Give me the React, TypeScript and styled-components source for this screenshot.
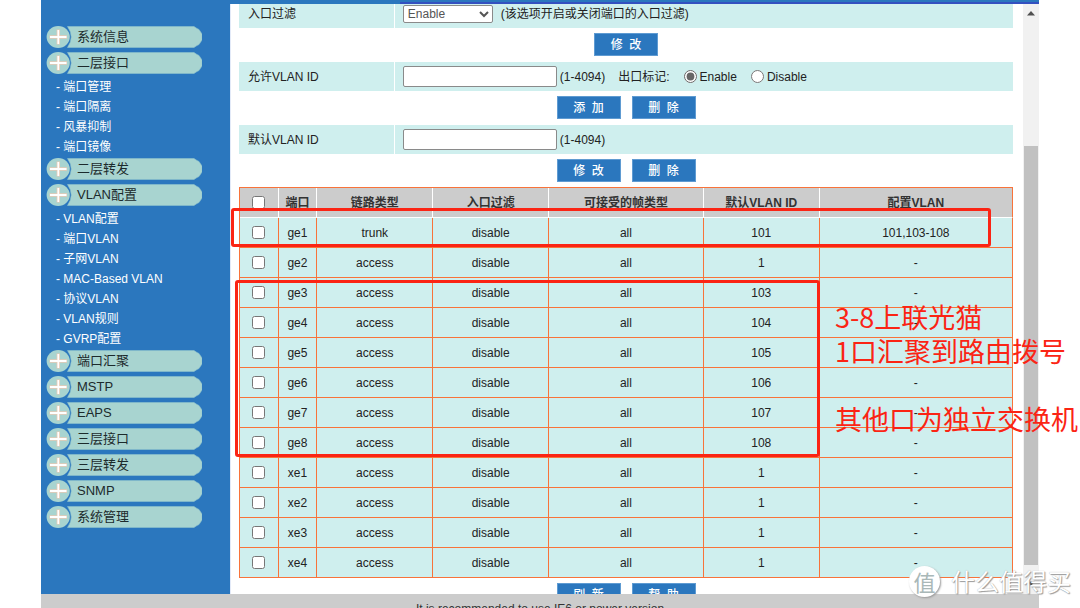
import React from 'react';
import styled, { createGlobalStyle } from 'styled-components';

const BLUE = '#2b77be';
const PALE = '#cfefee';
const PILL = '#a8d4d0';
const GRAY = '#cccccc';
const ORANGE = '#f8733a';
const RED = '#fb2414';

const GlobalStyle = createGlobalStyle`
  * { box-sizing: border-box; }
  body {
    margin: 0;
    background: #fff;
    color: #222;
    font: 12px/16px "Liberation Sans", "Noto Sans CJK SC", sans-serif;
    overflow: hidden;
  }
  button, input, select { font: inherit; margin: 0; }
`;

const Shell = styled.div`
  position: relative;
  display: flex;
  flex-direction: column;
  height: 100vh;
  padding: 0 41px;
  overflow: hidden;
`;

const Banner = styled.header`
  flex: none;
  display: flex;
  justify-content: flex-end;
  align-items: flex-end;
  height: 4px;
  background: ${BLUE};
`;

const BannerTrim = styled.div`
  width: 64%;
  height: 2px;
  background: #3350c0;
`;

const Body = styled.div`
  flex: 1;
  min-height: 0;
  display: flex;
`;

const Sidebar = styled.nav`
  flex: none;
  width: 189px;
  padding: 20px 0 0 5px;
  background: ${BLUE};
`;

const Group = styled.button`
  display: grid;
  align-items: center;
  height: 26px;
  padding: 0;
  border: 0;
  background: none;
  color: #1c2a2c;
  font-size: 13px;
  text-align: left;
  cursor: pointer;

  > * { grid-area: 1 / 1; }
`;

const GroupText = styled.span`
  padding-left: 31px;
`;

const SubList = styled.ul`
  margin: 0;
  padding: 0 0 0 10px;
  list-style: none;
`;

const SubItem = styled.li`
  height: 20px;
  line-height: 22px;
  color: #fff;
`;

const SubLink = styled.a`
  color: inherit;
  text-decoration: none;
`;

const Content = styled.main`
  flex: 1;
  min-width: 0;
  padding: 0 10px 0 8px;
  border-left: 1px solid #e3eaf8;
  overflow: hidden;
`;

const Scrolled = styled.div`
  margin-top: -6px;
`;

const FormRow = styled.div`
  display: grid;
  grid-template-columns: 20% 1fr;
  gap: 1px;
  height: 29px;
  margin-top: 1px;
`;

const FormLabel = styled.label`
  display: flex;
  align-items: center;
  padding-left: 9px;
  background: ${PALE};
`;

const FormValue = styled.div`
  display: flex;
  align-items: center;
  padding-left: 8px;
  background: ${PALE};
`;

const Select = styled.select`
  width: 90px;
  height: 18px;
  margin-right: 8px;
  padding: 0;
  border: 1px solid #8a8a8a;
  border-radius: 2px;
  background: #fff;
  color: #555;
`;

const TextBox = styled.input`
  width: 154px;
  height: 21px;
  margin-right: 3px;
  border: 1px solid #8a8a8a;
  border-radius: 2px;
  background: #fff;
`;

const Choices = styled.div`
  display: flex;
  align-items: center;
  margin-left: 13px;
`;

const Choice = styled.label`
  display: flex;
  align-items: center;
  gap: 3px;
  margin-left: 14px;
`;

const Actions = styled.div`
  display: flex;
  justify-content: center;
  align-items: center;
  gap: 11px;
  height: 33px;
`;

const ActionButton = styled.button`
  width: 64px;
  height: 23px;
  padding: 0;
  border: 1px solid #5f9bd2;
  background: ${BLUE};
  color: #fff;
  font-weight: 500;
  white-space: pre;
`;

const Table = styled.table`
  width: 100%;
  table-layout: fixed;
  border-collapse: separate;
  border-spacing: 0;
  border: 0 solid ${ORANGE};
  border-width: 1px 0 0 1px;
  text-align: center;
`;

const HeadCell = styled.th<{ $share: number }>`
  width: ${(p) => p.$share}%;
  height: 30px;
  padding: 0;
  border: 0 solid #fff;
  border-width: 0 1px 1px 0;
  background: ${GRAY};
  color: #333;

  &:last-child { border-right-color: ${ORANGE}; }
`;

const Cell = styled.td`
  height: 30px;
  padding: 0;
  border: 0 solid ${ORANGE};
  border-width: 0 1px 1px 0;
  background: ${PALE};
`;

const Check = styled.input`
  display: block;
  width: 13px;
  height: 13px;
  && { margin: 0 auto; }
`;

const Scrollbar = styled.div`
  flex: none;
  display: flex;
  flex-direction: column;
  align-items: center;
  width: 16px;
  background: #f1f1f1;
`;

const ScrollArrow = styled.svg`
  flex: none;
  width: 16px;
  height: 18px;
`;

const ScrollTrack = styled.div`
  flex: 1;
  align-self: stretch;
  padding: 124px 1px 11px;
`;

const ScrollThumb = styled.div`
  height: 100%;
  background: #c1c1c1;
`;

const Footer = styled.footer`
  flex: none;
  height: 14px;
  padding-top: 7px;
  overflow: hidden;
  background: ${GRAY};
  color: #333;
  text-align: center;
`;

const Mark = styled.div<{ $x: number; $y: number; $w: number; $h: number }>`
  position: absolute;
  left: ${(p) => p.$x}px;
  top: ${(p) => p.$y}px;
  width: ${(p) => p.$w}px;
  height: ${(p) => p.$h}px;
  border: 3px solid ${RED};
  border-radius: 3px;
  pointer-events: none;
`;

const Note = styled.p`
  position: absolute;
  left: 835px;
  top: 300px;
  margin: 0;
  color: ${RED};
  font: 400 27px/34px "Noto Sans CJK SC", sans-serif;
  white-space: pre;
  pointer-events: none;
`;

const Watermark = styled.div`
  position: absolute;
  right: 9px;
  bottom: 10px;
  display: flex;
  align-items: center;
  gap: 11px;
  color: #fff;
  font: 24px/34px "Noto Sans CJK SC", sans-serif;
  text-shadow: 1px 1px 1px #999, 0 0 1px #aaa;
  pointer-events: none;
`;

const WatermarkBadge = styled.span`
  width: 31px;
  height: 31px;
  border-radius: 50%;
  background: #fff;
  box-shadow: 1px 1px 2px #999;
  color: #a9b8b8;
  font-size: 22px;
  line-height: 30px;
  text-align: center;
  text-shadow: none;
`;

const menu: { title: string; items?: string[] }[] = [
  { title: '系统信息' },
  { title: '二层接口', items: ['端口管理', '端口隔离', '风暴抑制', '端口镜像'] },
  { title: '二层转发' },
  {
    title: 'VLAN配置',
    items: ['VLAN配置', '端口VLAN', '子网VLAN', 'MAC-Based VLAN', '协议VLAN', 'VLAN规则', 'GVRP配置'],
  },
  { title: '端口汇聚' },
  { title: 'MSTP' },
  { title: 'EAPS' },
  { title: '三层接口' },
  { title: '三层转发' },
  { title: 'SNMP' },
  { title: '系统管理' },
];

const columns: [string, number][] = [
  ['端口', 5],
  ['链路类型', 15],
  ['入口过滤', 15],
  ['可接受的帧类型', 20],
  ['默认VLAN ID', 15],
  ['配置VLAN', 25],
];

const ports: [string, string, string, string][] = [
  ['ge1', 'trunk', '101', '101,103-108'],
  ['ge2', 'access', '1', '-'],
  ['ge3', 'access', '103', '-'],
  ['ge4', 'access', '104', '-'],
  ['ge5', 'access', '105', '-'],
  ['ge6', 'access', '106', '-'],
  ['ge7', 'access', '107', '-'],
  ['ge8', 'access', '108', '-'],
  ['xe1', 'access', '1', '-'],
  ['xe2', 'access', '1', '-'],
  ['xe3', 'access', '1', '-'],
  ['xe4', 'access', '1', '-'],
];

function PillShape() {
  return (
    <svg width="156" height="22" viewBox="0 0 156 22" aria-hidden="true">
      <path d="M21.5 0.5H148L151 2.5L153 3.5L156 8V14L153 18.5L151 19.5L148 21.5H21.5Q29 11 21.5 0.5Z" fill={PILL} stroke="#8fc3cd" strokeWidth="0.6" />
      <ellipse cx="12.2" cy="11" rx="11.6" ry="10.9" fill={PILL} />
      <path d="M3.5 11H21M12.3 3.5V18.5" stroke="#e8c9b4" strokeWidth="3.4" />
      <path d="M4 11H20.5M12.3 4V18" stroke="#fff" strokeWidth="1.8" />
    </svg>
  );
}

export default function App() {
  return (
    <Shell>
      <GlobalStyle />
      <Banner>
        <BannerTrim />
      </Banner>
      <Body>
        <Sidebar>
          {menu.map((group) => (
            <React.Fragment key={group.title}>
              <Group type="button">
                <PillShape />
                <GroupText>{group.title}</GroupText>
              </Group>
              {group.items && (
                <SubList>
                  {group.items.map((item) => (
                    <SubItem key={item}>
                      - <SubLink href="#">{item}</SubLink>
                    </SubItem>
                  ))}
                </SubList>
              )}
            </React.Fragment>
          ))}
        </Sidebar>
        <Content>
          <Scrolled>
            <FormRow>
              <FormLabel htmlFor="ingress">入口过滤</FormLabel>
              <FormValue>
                <Select id="ingress" defaultValue="Enable">
                  <option>Enable</option>
                  <option>Disable</option>
                </Select>
                <span>(该选项开启或关闭端口的入口过滤)</span>
              </FormValue>
            </FormRow>
            <Actions>
              <ActionButton type="button">{'修  改'}</ActionButton>
            </Actions>
            <FormRow>
              <FormLabel htmlFor="allowed">允许VLAN ID</FormLabel>
              <FormValue>
                <TextBox id="allowed" type="text" />
                <span>(1-4094)</span>
                <Choices role="radiogroup" aria-labelledby="egress">
                  <span id="egress">出口标记:</span>
                  <Choice>
                    <input type="radio" name="egress" defaultChecked style={{ accentColor: '#666' }} />
                    Enable
                  </Choice>
                  <Choice>
                    <input type="radio" name="egress" />
                    Disable
                  </Choice>
                </Choices>
              </FormValue>
            </FormRow>
            <Actions>
              <ActionButton type="button">{'添  加'}</ActionButton>
              <ActionButton type="button">{'删  除'}</ActionButton>
            </Actions>
            <FormRow>
              <FormLabel htmlFor="default-vlan">默认VLAN ID</FormLabel>
              <FormValue>
                <TextBox id="default-vlan" type="text" />
                <span>(1-4094)</span>
              </FormValue>
            </FormRow>
            <Actions>
              <ActionButton type="button">{'修  改'}</ActionButton>
              <ActionButton type="button">{'删  除'}</ActionButton>
            </Actions>
            <Table>
              <thead>
                <tr>
                  <HeadCell $share={5}>
                    <Check type="checkbox" aria-label="全选" />
                  </HeadCell>
                  {columns.map(([name, share]) => (
                    <HeadCell key={name} $share={share}>
                      {name}
                    </HeadCell>
                  ))}
                </tr>
              </thead>
              <tbody>
                {ports.map(([port, link, pvid, vlans]) => (
                  <tr key={port}>
                    <Cell>
                      <Check type="checkbox" aria-label={port} />
                    </Cell>
                    <Cell>{port}</Cell>
                    <Cell>{link}</Cell>
                    <Cell>disable</Cell>
                    <Cell>all</Cell>
                    <Cell>{pvid}</Cell>
                    <Cell>{vlans}</Cell>
                  </tr>
                ))}
              </tbody>
            </Table>
            <Actions>
              <ActionButton type="button">{'刷  新'}</ActionButton>
              <ActionButton type="button">{'帮  助'}</ActionButton>
            </Actions>
          </Scrolled>
        </Content>
        <Scrollbar>
          <ScrollArrow viewBox="0 0 16 18" aria-hidden="true">
            <path d="M4 11.5L8 7L12 11.5Z" fill="#505050" />
          </ScrollArrow>
          <ScrollTrack>
            <ScrollThumb />
          </ScrollTrack>
          <ScrollArrow viewBox="0 0 16 18" aria-hidden="true">
            <path d="M4 5.5L8 10L12 5.5Z" fill="#505050" />
          </ScrollArrow>
        </Scrollbar>
      </Body>
      <Footer>It is recommended to use IE6 or power version</Footer>
      <Mark $x={231} $y={208} $w={760} $h={39} />
      <Mark $x={235} $y={280} $w={585} $h={177} />
      <Note>{'3-8上联光猫\n1口汇聚到路由拨号\n\n其他口为独立交换机'}</Note>
      <Watermark>
        <WatermarkBadge>值</WatermarkBadge>
        <span>什么值得买</span>
      </Watermark>
    </Shell>
  );
}
